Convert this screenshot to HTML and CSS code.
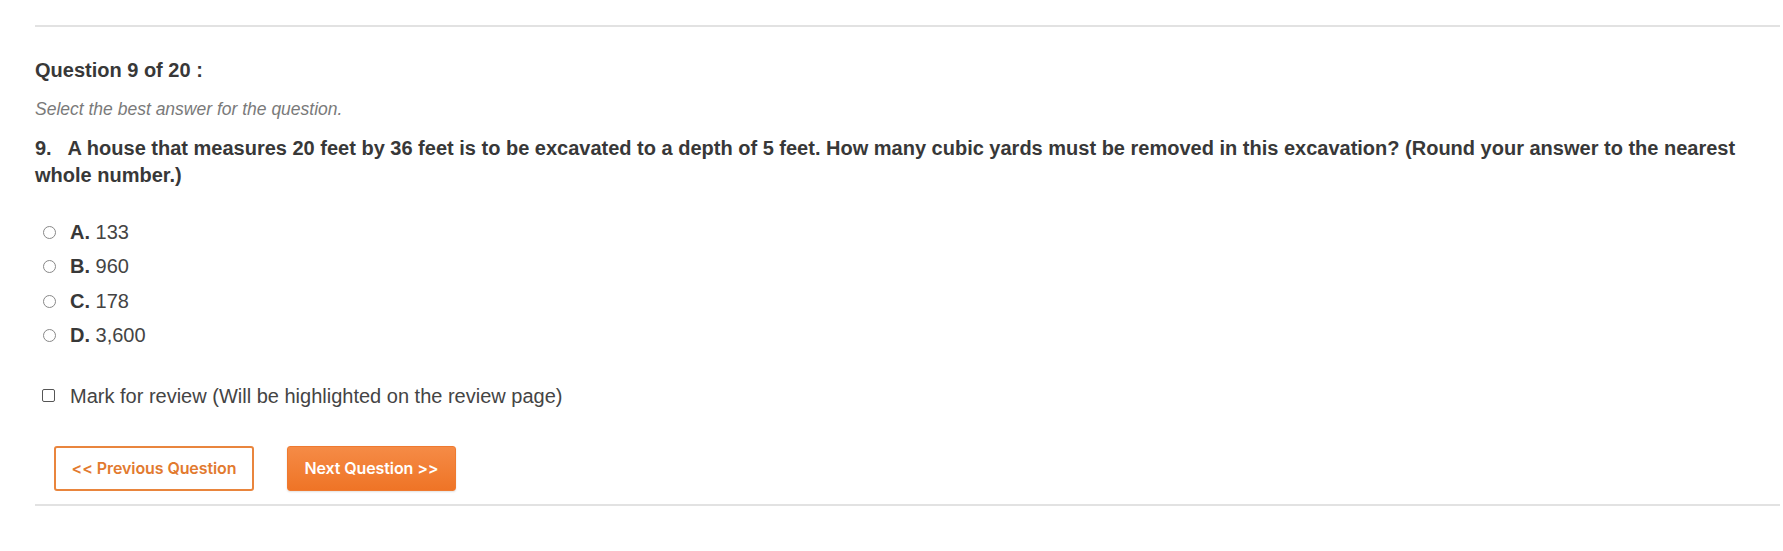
FILE: index.html
```html
<!DOCTYPE html>
<html lang="en">
<head>
<meta charset="utf-8">
<title>Question 9 of 20</title>
<link rel="stylesheet" href="styles.css">
</head>
<body>
<div class="quiz">
  <div class="rule rule-top"></div>
  <h2 class="q-count">Question 9 of 20 :</h2>
  <p class="q-hint">Select the best answer for the question.</p>
  <p class="q-text">9.&nbsp;&nbsp; A house that measures 20 feet by 36 feet is to be excavated to a depth of 5 feet. How many cubic yards must be removed in this excavation? (Round your answer to the nearest whole number.)</p>
  <div class="options">
    <label class="option"><input type="radio" name="ans" class="radio"><span class="opt-text"><b>A.</b> 133</span></label>
    <label class="option"><input type="radio" name="ans" class="radio"><span class="opt-text"><b>B.</b> 960</span></label>
    <label class="option"><input type="radio" name="ans" class="radio"><span class="opt-text"><b>C.</b> 178</span></label>
    <label class="option"><input type="radio" name="ans" class="radio"><span class="opt-text"><b>D.</b> 3,600</span></label>
  </div>
  <label class="review"><input type="checkbox" class="check"><span class="review-text">Mark for review (Will be highlighted on the review page)</span></label>
  <div class="actions">
    <button class="btn btn-prev" type="button">&lt;&lt; Previous Question</button>
    <button class="btn btn-next" type="button">Next Question &gt;&gt;</button>
  </div>
  <div class="rule rule-bottom"></div>
</div>
</body>
</html>
```

FILE: styles.css
```css
html, body {
  margin: 0;
  padding: 0;
  background: #ffffff;
}
body {
  font-family: "Liberation Sans", Arial, sans-serif;
  color: #3a3a3a;
}
.quiz {
  margin-left: 35px;
  margin-right: 3px;
  padding-top: 25px;
}
.rule {
  height: 2px;
  background: #e2e2e2;
}
.q-count {
  margin: 31px 0 0 0;
  font-size: 20px;
  line-height: 24px;
  font-weight: bold;
  color: #383838;
}
.q-hint {
  margin: 17px 0 0 0;
  font-size: 17.5px;
  line-height: 21px;
  font-style: italic;
  color: #7a7a7a;
}
.q-text {
  margin: 14.5px 0 0 0;
  font-size: 20px;
  line-height: 27px;
  font-weight: bold;
  color: #383838;
  padding-right: 40px;
}
.options {
  margin-top: 26.4px;
  display: flex;
  flex-direction: column;
}
.option, .review {
  display: flex;
  align-items: center;
  height: 34.5px;
  font-size: 20px;
  line-height: 34.5px;
  color: #444;
}
.opt-text b {
  color: #383838;
}
.radio {
  appearance: none;
  -webkit-appearance: none;
  margin: 0 14px 0 8px;
  width: 13px;
  height: 13px;
  border: 1px solid #888;
  border-radius: 50%;
  background: #fff;
  box-sizing: border-box;
}
.review {
  margin-top: 25.75px;
}
.check {
  appearance: none;
  -webkit-appearance: none;
  margin: 0 15px 0 7px;
  width: 13px;
  height: 13px;
  border: 1px solid #555;
  border-radius: 2px;
  background: #fff;
  box-sizing: border-box;
}
.actions {
  display: flex;
  gap: 33px;
  margin: 32.75px 0 13px 19px;
}
.btn {
  height: 45px;
  border-radius: 3px;
  font-family: Inter, "Open Sans", sans-serif;
  font-weight: 600;
  font-size: 16px;
  letter-spacing: -0.1px;
  cursor: pointer;
  box-sizing: border-box;
  padding: 0;
}
.btn-prev {
  width: 200px;
  background: #fff;
  border: 2px solid #e9853d;
  color: #e27a2f;
}
.btn-next {
  width: 169px;
  border: 1px solid #ef7a30;
  background: linear-gradient(#f58b46, #ef7426);
  color: #fff;
  box-shadow: 0 1px 2px rgba(0,0,0,0.12);
}
```
